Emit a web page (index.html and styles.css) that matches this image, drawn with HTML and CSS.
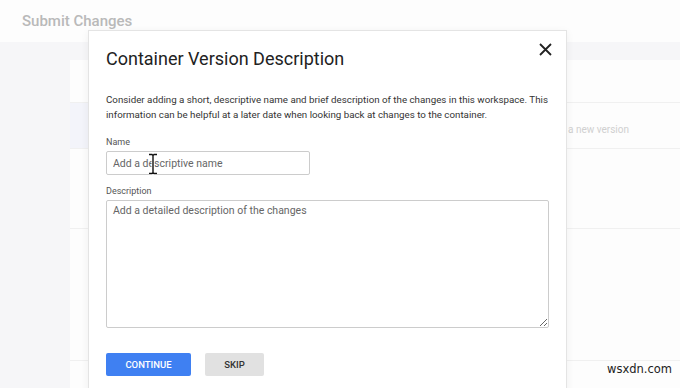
FILE: index.html
```html
<!DOCTYPE html>
<html lang="en">
<head>
    <meta charset="UTF-8">
    <meta name="viewport" content="width=device-width, initial-scale=1.0">
    <title>Submit Changes</title>
    <link rel="stylesheet" href="styles.css">
</head>
<body>
    <header class="top-bar">
        <h1>Submit Changes</h1>
    </header>

    <main class="page">
        <div class="side"></div>
        <div class="card">
            <div class="card-top"></div>
            <div class="card-row selected"><span class="hint">a new version</span></div>
            <div class="card-row tall"></div>
            <div class="card-row tall2"></div>
        </div>
    </main>

    <div class="dialog">
        <button class="close" aria-label="Close">
            <svg width="13" height="13" viewBox="0 0 13 13"><path d="M1 1L12 12M12 1L1 12" stroke="#222" stroke-width="1.8" fill="none"/></svg>
        </button>
        <h2>Container Version Description</h2>
        <p class="intro">Consider adding a short, descriptive name and brief description of the changes in this workspace. This information can be helpful at a later date when looking back at changes to the container.</p>

        <form>
            <label for="versionName">Name</label>
            <input type="text" id="versionName" placeholder="Add a descriptive name">

            <label for="versionDesc">Description</label>
            <textarea id="versionDesc" placeholder="Add a detailed description of the changes"></textarea>

            <div class="actions">
                <button type="button" class="btn primary">CONTINUE</button>
                <button type="button" class="btn secondary">SKIP</button>
            </div>
        </form>

        <svg class="cursor" width="10" height="22" viewBox="0 0 10 22"><path d="M1 1.5h3l1 1 1-1h3M5 2.5v17M1 20.5h3l1-1 1 1h3" stroke="#fff" stroke-width="3" fill="none"/><path d="M1 1.5h3l1 1 1-1h3M5 2.5v17M1 20.5h3l1-1 1 1h3" stroke="#111" stroke-width="1.4" fill="none"/></svg>
    </div>

    <div class="watermark">wsxdn.com</div>
</body>
</html>
```

FILE: styles.css
```css
/* Fondo: pantalla de envío atenuada */
body {
    margin: 0;
    font-family: Roboto, "Liberation Sans", sans-serif;
    background-color: #f6f6f8;
    width: 680px;
    height: 388px;
    overflow: hidden;
    position: relative;
}
.top-bar {
    height: 42px;
    background-color: #fdfdfd;
    display: flex;
    align-items: center;
    padding-left: 22px;
}
.top-bar h1 {
    margin: 0;
    font-size: 15px;
    font-weight: 500;
    color: #b9b9b9;
}
.page {
    display: flex;
    padding-top: 18px;
}
.side {
    width: 70px;
    flex-shrink: 0;
}
.card {
    flex: 1;
    background-color: #fdfdfd;
    height: 330px;
}
.card-top {
    height: 42px;
}
.card-row {
    border-top: 1px solid #f0f0f0;
    position: relative;
}
.card-row.selected {
    height: 45px;
    background: linear-gradient(to right, #f3f4fa 0 18px, transparent 18px);
}
.card-row .hint {
    position: absolute;
    left: 498px;
    top: 21px;
    font-size: 10px;
    color: #d0d0d0;
}
.card-row.tall {
    height: 79px;
}
.card-row.tall2 {
    height: 131px;
    border-bottom: 1px solid #f0f0f0;
}

/* Diálogo */
.dialog {
    position: absolute;
    left: 88px;
    top: 30px;
    width: 443px;
    height: 380px;
    padding: 14px 17px 0;
    background-color: #fff;
    border: 1px solid #e4e4e4;
    box-shadow: 0 2px 8px rgba(0, 0, 0, 0.06);
}
.dialog h2 {
    margin: 0;
    font-size: 18px;
    font-weight: 400;
    color: #222;
    line-height: 28px;
}
.close {
    position: absolute;
    right: 14px;
    top: 12px;
    border: none;
    background: none;
    padding: 0;
    width: 13px;
    height: 13px;
}
.intro {
    margin: 19px -8px 0 0;
    font-size: 9.75px;
    line-height: 15px;
    color: #333;
}
form label {
    display: block;
    font-size: 9px;
    color: #555;
    margin: 15px 0 4px;
}
form label[for="versionDesc"] {
    margin-top: 11px;
}
form input,
form textarea {
    display: block;
    box-sizing: border-box;
    border: 1px solid #ccc;
    border-radius: 2px;
    font-family: Roboto, "Liberation Sans", sans-serif;
    font-size: 10.5px;
    color: #333;
    padding: 4px 6px;
    margin: 0;
}
form input {
    width: 204px;
    height: 24px;
}
form textarea {
    width: 443px;
    height: 128px;
    resize: vertical;
    padding-top: 3px;
}
input::placeholder,
textarea::placeholder {
    color: #666;
}
.actions {
    display: flex;
    gap: 14px;
    margin-top: 25px;
}
.btn {
    height: 23px;
    border: none;
    border-radius: 2px;
    font-family: Roboto, "Liberation Sans", sans-serif;
    font-size: 9.5px;
    font-weight: 500;
    padding: 0;
}
.btn.primary {
    width: 85px;
    background-color: #3f80f2;
    color: #fff;
}
.btn.secondary {
    width: 59px;
    background-color: #e1e1e1;
    color: #333;
}
.cursor {
    position: absolute;
    left: 59px;
    top: 122px;
}
.watermark {
    position: absolute;
    left: 607px;
    top: 362px;
    font-family: "DejaVu Sans", sans-serif;
    font-size: 11.5px;
    color: #222;
}
```
